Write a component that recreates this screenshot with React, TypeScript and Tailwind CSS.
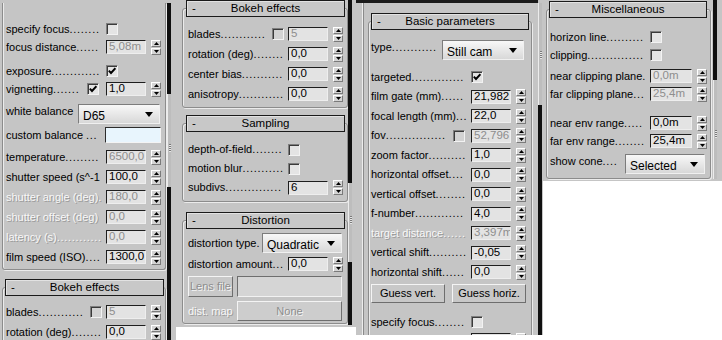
import type { ReactNode } from 'react';

const OFF = 'text-[#f8f8f8] [text-shadow:1px_1px_0_#999999]';

function Row({ h = 'h-[20px]', className = '', children }: { h?: string; className?: string; children: ReactNode }) {
  return <div className={`flex shrink-0 items-center ${h} ${className}`}>{children}</div>;
}

// label followed by n leader dots
function Label({ text, w, n = 0, off = false, up = false }: { text: string; w: string; n?: number; off?: boolean; up?: boolean }) {
  return (
    <span
      className={`${w} shrink-0 whitespace-nowrap pr-[4px] leading-[13px] ${off ? OFF : ''} ${up ? 'mb-[6px]' : ''}`}
    >
      {text}
      {n > 0 && <span className="tracking-[0.7px]">{'.'.repeat(n)}</span>}
    </span>
  );
}

function Check({ on = false, off = false }: { on?: boolean; off?: boolean }) {
  return (
    <span
      className={`flex h-[12px] w-[12px] shrink-0 items-center justify-center border border-t-[#7e7e7e] border-l-[#7e7e7e] border-b-[#f2f2f2] border-r-[#f2f2f2] shadow-[inset_1px_1px_0_#3a3a3a] ${off ? 'bg-[#d3d3d3]' : 'bg-[#e4e4e4]'}`}
    >
      {on && (
        <svg width="8" height="8" viewBox="0 0 8 8">
          <path d="M0.8 3.6 L3 6 L7.4 1.2" fill="none" stroke="#000" strokeWidth="1.9" />
        </svg>
      )}
    </span>
  );
}

function Field({ v, off = false, w = 'w-[40px]' }: { v: string; off?: boolean; w?: string }) {
  return (
    <span
      className={`flex h-[14px] ${w} shrink-0 items-center overflow-hidden whitespace-nowrap border border-t-[#1e1e1e] border-l-[#1e1e1e] border-b-[#eeeeee] border-r-[#eeeeee] bg-[#e3e3e3] pl-[2px] text-[11.5px] leading-none ${off ? 'text-[#8e8e8e]' : 'text-black'}`}
    >
      {v}
    </span>
  );
}

function Spin() {
  return (
    <span className="ml-[5px] flex h-[15px] w-[10px] shrink-0 flex-col gap-px">
      <span className="flex flex-1 items-center justify-center border border-t-white border-l-white border-b-[#7a7a7a] border-r-[#7a7a7a] bg-[#d4d4d4]">
        <svg width="5" height="3" viewBox="0 0 5 3">
          <path d="M2.5 0L5 3H0Z" fill="#000" />
        </svg>
      </span>
      <span className="flex flex-1 items-center justify-center border border-t-white border-l-white border-b-[#7a7a7a] border-r-[#7a7a7a] bg-[#d4d4d4]">
        <svg width="5" height="3" viewBox="0 0 5 3">
          <path d="M0 0H5L2.5 3Z" fill="#000" />
        </svg>
      </span>
    </span>
  );
}

function Num({ v, off = false, w, className = '' }: { v: string; off?: boolean; w?: string; className?: string }) {
  return (
    <span className={`flex shrink-0 items-center ${className}`}>
      <Field v={v} off={off} w={w} />
      <Spin />
    </span>
  );
}

function Drop({ v, w }: { v: string; w: string }) {
  return (
    <span
      className={`flex h-[20px] ${w} shrink-0 items-center justify-between border border-t-[#7c7c7c] border-l-[#7c7c7c] border-b-[#f0f0f0] border-r-[#f0f0f0] bg-gradient-to-b from-[#f8f8f8] to-[#d8d8d8] pl-[4px] pr-[6px] pt-[3px] text-[12px] leading-none text-black`}
    >
      {v}
      <svg width="8" height="5" viewBox="0 0 8 5" className="-mt-[2px]">
        <path d="M0 0H8L4 5Z" fill="#000" />
      </svg>
    </span>
  );
}

function Btn({ children, w, off = false, light = false }: { children: ReactNode; w: string; off?: boolean; light?: boolean }) {
  return (
    <span
      className={`flex h-full ${w} shrink-0 items-center justify-center border border-t-[#f4f4f4] border-l-[#f4f4f4] border-b-[#6e6e6e] border-r-[#6e6e6e] ${light ? 'bg-[#cdcdcd]' : 'bg-[#c8c8c8]'} ${off ? 'text-[#8d8d8d] [text-shadow:1px_1px_0_#f4f4f4]' : 'text-black'}`}
    >
      {children}
    </span>
  );
}

function Head({ t, className = '' }: { t: string; className?: string }) {
  return (
    <div
      className={`relative z-10 flex h-[17px] items-center justify-center border border-[#1a1a1a] bg-[#c8c8c8] shadow-[inset_1px_1px_0_#e2e2e2] text-[11.5px] leading-none ${className}`}
    >
      <span className="absolute left-[5px] top-[2px]">-</span>
      {t}
    </div>
  );
}

const FRAME = 'rounded-[3px] border border-[#8c8c8c] shadow-[1px_1px_0_#ebebeb,inset_1px_1px_0_#ebebeb]';

function Rollout({ t, head, body, className = '', children }: { t: string; head: string; body: string; className?: string; children: ReactNode }) {
  return (
    <div className={className}>
      <Head t={t} className={head} />
      <div className={`-mt-[9px] flex flex-col ${FRAME} ${body}`}>{children}</div>
    </div>
  );
}

function Grip() {
  return <div className="mx-auto h-[8px] w-[2px] bg-[repeating-linear-gradient(to_bottom,#7a7a7a_0_1px,#e6e6e6_1px_2px)]" />;
}

function CameraPanel() {
  return (
    <div className="flex h-[340px] w-[176px] shrink-0 flex-col bg-[#c5c5c5]">
      <div className="mt-[3px] h-[3px] w-[172px] bg-[#1b1b1b]" />
      <div className="flex flex-1">
        <div className="w-[166px] pl-[2px]">
          <div className="flex flex-col rounded-b-[3px] border border-t-0 border-[#8c8c8c] shadow-[1px_1px_0_#ebebeb,inset_1px_0_0_#ebebeb] pb-[2px] pl-[3px] pt-[17px]">
            <Row h="h-[18px]">
              <Label w="w-[100px]" text="specify focus" n={8} />
              <Check />
            </Row>
            <Row h="h-[18px]">
              <Label w="w-[100px]" text="focus distance" n={6} />
              <Num v="5,08m" off />
            </Row>
            <Row h="h-[18px]" className="mt-[6px]">
              <Label w="w-[100px]" text="exposure" n={13} />
              <Check on />
            </Row>
            <Row h="h-[18px]">
              <Label w="w-[81px]" text="vignetting" n={7} />
              <Check on />
              <Num v="1,0" className="ml-[7px]" />
            </Row>
            <Row h="h-[22px]" className="mt-[5px]">
              <Label w="w-[72px]" text="white balance" up />
              <Drop v="D65" w="w-[82px]" />
            </Row>
            <Row>
              <Label w="w-[99px]" text="custom balance " n={3} />
              <span className="h-[16px] w-[56px] border border-t-[#2c2c2c] border-l-[#2c2c2c] border-b-[#f4f4f4] border-r-[#f4f4f4] bg-[#e8f5fd]" />
            </Row>
            <Row className="mt-[2px]">
              <Label w="w-[100px]" text="temperature" n={9} />
              <Num v="6500,0" off />
            </Row>
            <Row>
              <Label w="w-[100px]" text="shutter speed (s^-1" />
              <Num v="100,0" />
            </Row>
            <Row>
              <Label w="w-[100px]" text="shutter angle (deg)." off />
              <Num v="180,0" off />
            </Row>
            <Row>
              <Label w="w-[100px]" text="shutter offset (deg)" off />
              <Num v="0,0" off />
            </Row>
            <Row>
              <Label w="w-[100px]" text="latency (s)" n={12} off />
              <Num v="0,0" off />
            </Row>
            <Row>
              <Label w="w-[100px]" text="film speed (ISO)" n={4} />
              <Num v="1300,0" />
            </Row>
          </div>
          <Rollout t="Bokeh effects" className="mt-[9px]" head="ml-[3px] mr-[2px]" body="pl-[3px] pt-[14px] pb-[4px]">
            <Row>
              <Label w="w-[84px]" text="blades" n={12} />
              <Check off />
              <Num v="5" off className="ml-[4px]" />
            </Row>
            <Row>
              <Label w="w-[100px]" text="rotation (deg)" n={8} />
              <Num v="0,0" />
            </Row>
          </Rollout>
        </div>
        <div className="ml-[1px] flex w-[4px] flex-col">
          <div className="h-[91px] bg-[#101010]" />
          <div className="h-[93px] border-l border-l-[#ececec] bg-[#bdbdbd] pt-[50px]">
            <Grip />
          </div>
          <div className="flex-1 bg-[#101010]" />
        </div>
      </div>
    </div>
  );
}

function EffectsPanel() {
  return (
    <div className="flex h-[327px] w-[180px] shrink-0 bg-[#c5c5c5]">
      <div className="w-[172px] pl-[6px]">
        <Rollout t="Bokeh effects" head="ml-[4px] mr-[3px]" body="px-[5px] pt-[15px] pb-[3px]">
          <Row>
            <Label w="w-[84px]" text="blades" n={12} />
            <Check off />
            <Num v="5" off className="ml-[4px]" />
          </Row>
          <Row>
            <Label w="w-[100px]" text="rotation (deg)" n={8} />
            <Num v="0,0" />
          </Row>
          <Row>
            <Label w="w-[100px]" text="center bias" n={11} />
            <Num v="0,0" />
          </Row>
          <Row>
            <Label w="w-[100px]" text="anisotropy" n={12} />
            <Num v="0,0" />
          </Row>
        </Rollout>
        <Rollout t="Sampling" className="mt-[7px]" head="ml-[4px] mr-[3px]" body="px-[5px] pt-[16px] pb-[4px]">
          <Row h="h-[19px]">
            <Label w="w-[100px]" text="depth-of-field" n={8} />
            <Check />
          </Row>
          <Row h="h-[19px]">
            <Label w="w-[100px]" text="motion blur" n={11} />
            <Check />
          </Row>
          <Row h="h-[19px]">
            <Label w="w-[100px]" text="subdivs" n={15} />
            <Num v="6" />
          </Row>
        </Rollout>
        <Rollout t="Distortion" className="mt-[10px]" head="ml-[4px] mr-[3px]" body="px-[5px] pt-[11px] pb-[2px]">
          <Row h="h-[22px]">
            <Label w="w-[74px]" text="distortion type." />
            <Drop v="Quadratic" w="w-[80px]" />
          </Row>
          <Row>
            <Label w="w-[100px]" text="distortion amount" n={3} />
            <Num v="0,0" />
          </Row>
          <Row h="h-[21px]" className="mt-[2px]">
            <Btn w="w-[45px]" off>
              Lens file
            </Btn>
            <span className="ml-[4px] h-full w-[105px] border border-t-[#6e6e6e] border-l-[#6e6e6e] border-b-[#f2f2f2] border-r-[#f2f2f2] bg-[#d5d5d5]" />
          </Row>
          <Row className="mt-[4px]">
            <Label w="w-[49px]" text="dist. map" off />
            <Btn w="w-[105px]" off light>
              None
            </Btn>
          </Row>
        </Rollout>
      </div>
      <div className="flex w-[4px] flex-col">
        <div className="h-[183px] bg-[#101010]" />
        <div className="h-[79px] border-l border-l-[#ececec] bg-[#bdbdbd] pt-[33px]">
          <Grip />
        </div>
        <div className="h-[63px] bg-[#101010]" />
      </div>
    </div>
  );
}

function BasicPanel() {
  return (
    <div className="flex h-[335px] w-[187px] shrink-0 flex-col overflow-hidden bg-[#c5c5c5]">
      <div className="h-[3px] w-[182px] shrink-0 bg-[#1b1b1b]" />
      <div className="flex flex-1">
        <div className="ml-[6px] w-[170px] border-l border-l-[#ededed] pl-[5px] shadow-[inset_1px_0_0_#8a8a8a]">
          <Rollout t="Basic parameters" className="mt-[10px]" head="mx-[3px]" body="px-[2px] pt-[17px] h-[330px]">
            <Row h="h-[22px]">
              <Label w="w-[71px]" text="type" n={12} up />
              <Drop v="Still cam" w="w-[82px]" />
            </Row>
            <Row className="mt-[6px]">
              <Label w="w-[100px]" text="targeted" n={14} />
              <Check on />
            </Row>
            <Row h="h-[19px]">
              <Label w="w-[100px]" text="film gate (mm)" n={6} />
              <Num v="21,982" />
            </Row>
            <Row>
              <Label w="w-[100px]" text="focal length (mm)" n={3} />
              <Num v="22,0" />
            </Row>
            <Row h="h-[19px]">
              <Label w="w-[82px]" text="fov" n={16} />
              <Check off />
              <Num v="52,796" off className="ml-[6px]" />
            </Row>
            <Row>
              <Label w="w-[100px]" text="zoom factor" n={10} />
              <Num v="1,0" />
            </Row>
            <Row h="h-[19px]">
              <Label w="w-[100px]" text="horizontal offset" n={4} />
              <Num v="0,0" />
            </Row>
            <Row>
              <Label w="w-[100px]" text="vertical offset" n={8} />
              <Num v="0,0" />
            </Row>
            <Row h="h-[19px]">
              <Label w="w-[100px]" text="f-number" n={13} />
              <Num v="4,0" />
            </Row>
            <Row>
              <Label w="w-[100px]" text="target distance" n={6} off />
              <Num v="3,397m" off />
            </Row>
            <Row h="h-[19px]">
              <Label w="w-[100px]" text="vertical shift" n={10} />
              <Num v="-0,05" />
            </Row>
            <Row>
              <Label w="w-[100px]" text="horizontal shift" n={6} />
              <Num v="0,0" />
            </Row>
            <Row h="h-[19px]" className="mt-[2px] gap-[7px]">
              <Btn w="w-[74px]">Guess vert.</Btn>
              <Btn w="w-[74px]">Guess horiz.</Btn>
            </Row>
            <Row className="mt-[9px]">
              <Label w="w-[100px]" text="specify focus" n={8} />
              <Check />
            </Row>
            {/* the next row is cut by the bottom edge: only the field top shows */}
            <Row h="h-[16px]" className="pl-[100px]">
              <Num v="" off />
            </Row>
          </Rollout>
        </div>
        <div className="ml-[6px] flex w-[4px] flex-col">
          <div className="h-[102px] border-l border-l-[#ececec] bg-[#bdbdbd] pt-[48px]">
            <Grip />
          </div>
          <div className="flex-1 bg-[#101010]" />
        </div>
      </div>
    </div>
  );
}

function MiscPanel() {
  return (
    <div className="flex h-[181px] w-[179px] shrink-0 bg-[#c5c5c5]">
      <div className="w-[168px] pl-[3px]">
        <Rollout t="Miscellaneous" className="mt-[1px]" head="ml-[3px] mr-[4px]" body="px-[3px] pt-[18px] pb-[3px]">
          <Row h="h-[18px]">
            <Label w="w-[100px]" text="horizon line" n={10} />
            <Check />
          </Row>
          <Row h="h-[18px]">
            <Label w="w-[100px]" text="clipping" n={15} />
            <Check />
          </Row>
          <Row h="h-[18px]" className="mt-[3px]">
            <Label w="w-[100px]" text="near clipping plane" n={1} />
            <Num v="0,0m" off w="w-[42px]" />
          </Row>
          <Row h="h-[18px]">
            <Label w="w-[100px]" text="far clipping plane" n={3} />
            <Num v="25,4m" off w="w-[42px]" />
          </Row>
          <Row h="h-[18px]" className="mt-[11px]">
            <Label w="w-[100px]" text="near env range" n={5} />
            <Num v="0,0m" w="w-[42px]" />
          </Row>
          <Row h="h-[18px]">
            <Label w="w-[100px]" text="far env range" n={8} />
            <Num v="25,4m" w="w-[42px]" />
          </Row>
          <Row h="h-[22px]" className="mt-[3px]">
            <Label w="w-[75px]" text="show cone" n={4} up />
            <Drop v="Selected" w="w-[80px]" />
          </Row>
        </Rollout>
      </div>
      <div className="ml-[2px] flex w-[4px] flex-col">
        <div className="h-[80px] bg-[#101010]" />
        <div className="h-[99px] border-l border-l-[#ececec] bg-[#bdbdbd] pt-[50px]">
          <Grip />
        </div>
      </div>
    </div>
  );
}

export default function App() {
  return (
    <div className="flex h-[340px] w-[722px] items-start overflow-hidden bg-white font-['Liberation_Sans',Arial,sans-serif] text-[11px] text-black">
      <CameraPanel />
      <EffectsPanel />
      <BasicPanel />
      <MiscPanel />
    </div>
  );
}
